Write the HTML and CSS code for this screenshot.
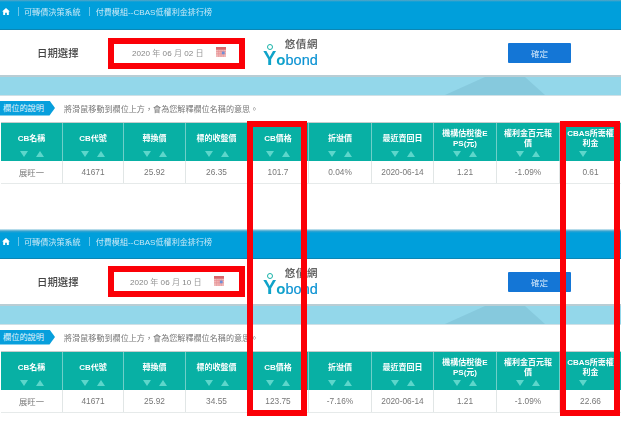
FILE: index.html
```html
<!DOCTYPE html>
<html lang="zh-Hant">
<head>
<meta charset="utf-8">
<title>CBAS低權利金排行榜</title>
<link rel="stylesheet" href="styles.css">
</head>
<body>
<div class="page">
  <section class="shot">
    <div class="bar">
      <svg class="home" viewBox="0 0 10 9"><path d="M5 0 0 4.6h1.4V9h2.5V6h2.2v3h2.5V4.6H10z" fill="#fff"/></svg>
      <span class="sep sep-first"></span><span class="crumb">可轉債決策系統</span>
      <span class="sep"></span><span class="crumb">付費模組--CBAS低權利金排行榜</span>
    </div>
    <div class="panel">
      <div class="title">日期選擇</div>
      <div class="date">
        <span>2020 <i>年</i> 06 <i>月</i> 02 <i>日</i></span>
        <svg class="cal" viewBox="0 0 11 11"><rect width="11" height="11" fill="#f0b8b8"/><rect width="11" height="3" fill="#d9686c"/><path d="M0 5h11M0 7.500h11M3 3v8M5.500 3v8M8 3v8" stroke="#e58d90" stroke-width=".7"/><rect x="6.500" y="5" width="3" height="3" fill="#6f8fd8"/></svg>
      </div>
      <div class="logo">
        <div class="logo-cn">悠債網</div>
        <div class="logo-en"><span class="y">Y</span><span class="o">o</span>bond<b class="dot"></b></div>
      </div>
      <button class="ok">確定</button>
    </div>
    <div class="band"></div>
    <div class="card">
      <div class="legend"><span class="tag">欄位的說明</span><span class="hint">將滑鼠移動到欄位上方，會為您解釋欄位名稱的意思。</span></div>
      <div class="grid head">
        <div class="th"><p>CB名稱</p><div class="arrows"><i class="dn"></i><i class="up"></i></div></div>
        <div class="th"><p>CB代號</p><div class="arrows"><i class="dn"></i><i class="up"></i></div></div>
        <div class="th"><p>轉換價</p><div class="arrows"><i class="dn"></i><i class="up"></i></div></div>
        <div class="th"><p>標的收盤價</p><div class="arrows"><i class="dn"></i><i class="up"></i></div></div>
        <div class="th"><p>CB價格</p><div class="arrows"><i class="dn"></i><i class="up"></i></div></div>
        <div class="th"><p>折溢價</p><div class="arrows"><i class="dn"></i><i class="up"></i></div></div>
        <div class="th"><p>最近賣回日</p><div class="arrows"><i class="dn"></i><i class="up"></i></div></div>
        <div class="th"><p>機構估稅後E<br>PS(元)</p><div class="arrows"><i class="dn"></i><i class="up"></i></div></div>
        <div class="th"><p>權利金百元報<br>價</p><div class="arrows"><i class="dn"></i><i class="up"></i></div></div>
        <div class="th"><p>CBAS所需權<br>利金</p><div class="arrows"><i class="dn"></i><i class="up off"></i></div></div>
      </div>
      <div class="grid row">
        <div>展旺一</div><div>41671</div><div>25.92</div><div>26.35</div><div>101.7</div><div>0.04%</div><div>2020-06-14</div><div>1.21</div><div>-1.09%</div><div>0.61</div>
      </div>
    </div>
  </section>
  <section class="shot shot-two">
    <div class="bar">
      <svg class="home" viewBox="0 0 10 9"><path d="M5 0 0 4.6h1.4V9h2.5V6h2.2v3h2.5V4.6H10z" fill="#fff"/></svg>
      <span class="sep sep-first"></span><span class="crumb">可轉債決策系統</span>
      <span class="sep"></span><span class="crumb">付費模組--CBAS低權利金排行榜</span>
    </div>
    <div class="panel">
      <div class="title">日期選擇</div>
      <div class="date">
        <span>2020 <i>年</i> 06 <i>月</i> 10 <i>日</i></span>
        <svg class="cal" viewBox="0 0 11 11"><rect width="11" height="11" fill="#f0b8b8"/><rect width="11" height="3" fill="#d9686c"/><path d="M0 5h11M0 7.500h11M3 3v8M5.500 3v8M8 3v8" stroke="#e58d90" stroke-width=".7"/><rect x="6.500" y="5" width="3" height="3" fill="#6f8fd8"/></svg>
      </div>
      <div class="logo">
        <div class="logo-cn">悠債網</div>
        <div class="logo-en"><span class="y">Y</span><span class="o">o</span>bond<b class="dot"></b></div>
      </div>
      <button class="ok">確定</button>
    </div>
    <div class="band"></div>
    <div class="card">
      <div class="legend"><span class="tag">欄位的說明</span><span class="hint">將滑鼠移動到欄位上方，會為您解釋欄位名稱的意思。</span></div>
      <div class="grid head">
        <div class="th"><p>CB名稱</p><div class="arrows"><i class="dn"></i><i class="up"></i></div></div>
        <div class="th"><p>CB代號</p><div class="arrows"><i class="dn"></i><i class="up"></i></div></div>
        <div class="th"><p>轉換價</p><div class="arrows"><i class="dn"></i><i class="up"></i></div></div>
        <div class="th"><p>標的收盤價</p><div class="arrows"><i class="dn"></i><i class="up"></i></div></div>
        <div class="th"><p>CB價格</p><div class="arrows"><i class="dn"></i><i class="up"></i></div></div>
        <div class="th"><p>折溢價</p><div class="arrows"><i class="dn"></i><i class="up"></i></div></div>
        <div class="th"><p>最近賣回日</p><div class="arrows"><i class="dn"></i><i class="up"></i></div></div>
        <div class="th"><p>機構估稅後E<br>PS(元)</p><div class="arrows"><i class="dn"></i><i class="up"></i></div></div>
        <div class="th"><p>權利金百元報<br>價</p><div class="arrows"><i class="dn"></i><i class="up"></i></div></div>
        <div class="th"><p>CBAS所需權<br>利金</p><div class="arrows"><i class="dn"></i><i class="up off"></i></div></div>
      </div>
      <div class="grid row">
        <div>展旺一</div><div>41671</div><div>25.92</div><div>34.55</div><div>123.75</div><div>-7.16%</div><div>2020-06-14</div><div>1.21</div><div>-1.09%</div><div>22.66</div>
      </div>
    </div>
  </section>
  <div class="mark mark-date-a"></div>
  <div class="mark mark-date-b"></div>
  <div class="mark mark-col-a"></div>
  <div class="mark mark-col-b"></div>
</div>
</body>
</html>
```
FILE: styles.css
```css
* { box-sizing: border-box; }
html, body { margin: 0; padding: 0; background: #fff; }
body { font-family: "Liberation Sans", "Noto Sans CJK TC", sans-serif; }
.page { position: relative; width: 630px; height: 422px; overflow: hidden; }
.shot { width: 621px; height: 229px; filter: blur(.4px); overflow: hidden; }
.shot-two { height: 193px; }

.bar { height: 30px; background: linear-gradient(#5aa5c4 0, #009fdb 2px); border-bottom: 1px solid #0b86b4; display: flex; align-items: center; padding: 0 0 6px 2px; color: #c9e9f6; font-size: 8.100px; }
.shot-two .bar { background: linear-gradient(#dfeef4 0, #3aa4cf 2px, #009fdb 4px); padding-bottom: 4px; }
.home { width: 8px; height: 7px; }
.sep { width: 1px; height: 9px; background: #6cc5e8; margin: 0 6px 0 8px; }
.sep-first { margin-left: 8px; margin-right: 5px; }
.crumb { white-space: nowrap; }

.panel { height: 47px; background: #fff; border-bottom: 2px solid #b9cdd4; display: flex; align-items: center; padding-left: 37px; }
.title { width: 75px; font-size: 10.400px; font-weight: 500; color: #444; }
.date { width: 151px; padding-left: 20px; display: flex; align-items: center; font-size: 8.100px; color: #868686; }
.date span { width: 84px; white-space: nowrap; }
.date i { font-style: normal; color: #999; }
.shot-two .date { padding-left: 18px; }
.cal { width: 10px; height: 10px; margin-top: -2px; }
.logo { width: 55px; }
.logo-cn { font-size: 10.500px; font-weight: 700; line-height: 10px; text-align: right; letter-spacing: .6px; color: #666; }
.logo-en { position: relative; height: 18px; font-size: 14.500px; line-height: 18px; color: #0d93d3; white-space: nowrap; -webkit-text-stroke: .2px #0d93d3; }
.y { color: #0fa3c9; font-weight: 700; font-size: 20px; -webkit-text-stroke: 0; }
.o { color: #0fa3c9; font-weight: 700; font-size: 15px; -webkit-text-stroke: 0; }
.dot { position: absolute; left: 4px; top: -5px; width: 6px; height: 6px; border: 1.500px solid #17b3a8; border-radius: 50%; }
.ok { width: 63px; height: 20px; margin-left: 190px; background: #1476d6; border: 0; border-radius: 1px; color: #cfe6fa; font: 8.500px "Liberation Sans", "Noto Sans CJK TC", sans-serif; padding: 0; }

.band { position: relative; height: 18px; background: #93d7ea; }
.band::after { content: ""; position: absolute; left: 445px; top: 0; width: 100px; height: 18px; background: #86c9dd; clip-path: polygon(40% 0, 80% 0, 100% 100%, 0 100%); }

.card { background: #fff; border-top: 1px solid #cfe0e6; padding-left: 1px; }
.legend { height: 26px; display: flex; align-items: center; padding-bottom: 2px; }
.tag { width: 55px; height: 15px; margin-left: -1px; background: #079fdc; color: #e4f5fc; font-size: 8.200px; line-height: 15px; padding-left: 3px; white-space: nowrap; clip-path: polygon(0 0, 90% 0, 100% 50%, 90% 100%, 0 100%); }
.hint { margin-left: 9px; font-size: 8.100px; color: #777; white-space: nowrap; }

.grid { display: grid; grid-template-columns: 62px 61px 62px 62px 61px 63px 62px 63px 63px 61px; }
.head { height: 39px; background: #08b0a4; border-top: 1px solid #c6cdcd; }
.th { border-right: 1px solid #6fcfc8; display: flex; flex-direction: column; align-items: center; color: #fff; font-size: 8px; font-weight: 700; text-align: center; line-height: 10px; }
.th:last-child { border-right: 0; }
.th p { margin: 0; height: 28px; padding-top: 3px; display: flex; align-items: center; justify-content: center; white-space: nowrap; }
.arrows { display: flex; gap: 8px; }
.arrows i { width: 0; height: 0; border-left: 4.500px solid transparent; border-right: 4.500px solid transparent; }
.dn { border-top: 6px solid #5dd6cb; }
.up { border-bottom: 6px solid #5dd6cb; }
.off { visibility: hidden; }
.row { height: 23px; border-bottom: 1px solid #e6eaea; color: #777; font-size: 8.300px; }
.row > div { display: flex; align-items: center; justify-content: center; border-right: 1px solid #e1e6e6; }
.row > div:last-child { border-right: 0; }

.mark { position: absolute; border: 6px solid #fb0007; }
.mark-date-a { left: 108px; top: 38px; width: 137px; height: 31px; }
.mark-date-b { left: 108px; top: 266px; width: 137px; height: 31px; }
.mark-col-a { left: 247px; top: 121px; width: 60px; height: 295px; }
.mark-col-b { left: 560px; top: 121px; width: 60px; height: 295px; }
```
